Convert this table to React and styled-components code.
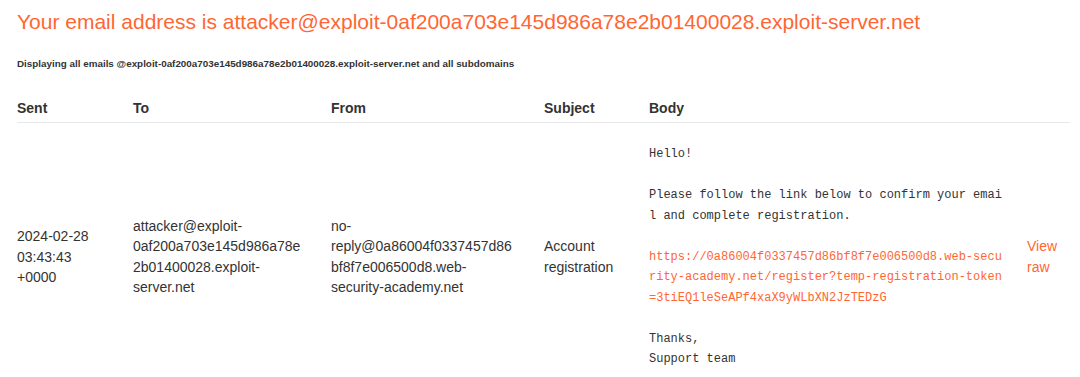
import React from 'react'
import styled, { createGlobalStyle } from 'styled-components'

const GlobalStyle = createGlobalStyle`
  html, body {
    margin: 0;
    padding: 0;
    background: #fff;
  }
  body {
    font-family: "Liberation Sans", Arial, sans-serif;
    color: #333;
  }
`

const Page = styled.div`
  padding: 9px 10px 0 17px;
`

const Title = styled.h1`
  margin: 0;
  font-size: 21px;
  font-weight: normal;
  line-height: 26px;
  color: #ff6633;
`

const Note = styled.p`
  margin: 23px 0 0;
  font-size: 9.85px;
  font-weight: bold;
  line-height: 12px;
  color: #333;
`

const Table = styled.table`
  margin-top: 22px;
  border-collapse: collapse;
  table-layout: fixed;
  width: 1053px;
`

const Head = styled.th`
  text-align: left;
  font-size: 14px;
  font-weight: bold;
  color: #333;
  padding: 7px 0 5px;
  line-height: 18px;
  border-bottom: 1px solid #e8e8e8;
`

const Cell = styled.td`
  vertical-align: middle;
  font-size: 14px;
  line-height: 20.5px;
  color: #333;
  padding: 21px ${p => p.$pad}px 8px 0;
  overflow-wrap: ${p => (p.$wrap ? 'anywhere' : 'normal')};
`

const Body = styled.pre`
  margin: 0;
  font-family: "Liberation Mono", "Courier New", monospace;
  font-size: 12px;
  line-height: 20.5px;
  color: #333;
  white-space: pre-wrap;
  word-break: break-all;
  width: 49ch;
`

const Link = styled.a`
  color: #ff6633;
  text-decoration: none;
`

const email = {
  sent: ['2024-02-28', '03:43:43', '+0000'],
  to: 'attacker@exploit-0af200a703e145d986a78e2b01400028.exploit-server.net',
  from: 'no-reply@0a86004f0337457d86bf8f7e006500d8.web-security-academy.net',
  subject: 'Account registration',
  url: 'https://0a86004f0337457d86bf8f7e006500d8.web-security-academy.net/register?temp-registration-token=3tiEQ1leSeAPf4xaX9yWLbXN2JzTEDzG',
}

export default function App() {
  return (
    <>
      <GlobalStyle />
      <Page>
        <Title>Your email address is attacker@exploit-0af200a703e145d986a78e2b01400028.exploit-server.net</Title>
        <Note>Displaying all emails @exploit-0af200a703e145d986a78e2b01400028.exploit-server.net and all subdomains</Note>
        <Table>
          <colgroup>
            <col style={{ width: 116 }} />
            <col style={{ width: 198 }} />
            <col style={{ width: 213 }} />
            <col style={{ width: 105 }} />
            <col style={{ width: 378 }} />
            <col style={{ width: 43 }} />
          </colgroup>
          <thead>
            <tr>
              <Head>Sent</Head>
              <Head>To</Head>
              <Head>From</Head>
              <Head>Subject</Head>
              <Head>Body</Head>
              <Head />
            </tr>
          </thead>
          <tbody>
            <tr>
              <Cell $pad={28}>{email.sent.map(s => <div key={s}>{s}</div>)}</Cell>
              <Cell $pad={28} $wrap>{email.to}</Cell>
              <Cell $pad={28} $wrap>{email.from}</Cell>
              <Cell $pad={10}>{email.subject}</Cell>
              <Cell $pad={10}>
                <Body>{'Hello!\n\nPlease follow the link below to confirm your email and complete registration.\n\n'}<Link href="#">{email.url}</Link>{'\n\nThanks,\nSupport team'}</Body>
              </Cell>
              <Cell $pad={0}><Link href="#">View raw</Link></Cell>
            </tr>
          </tbody>
        </Table>
      </Page>
    </>
  )
}
